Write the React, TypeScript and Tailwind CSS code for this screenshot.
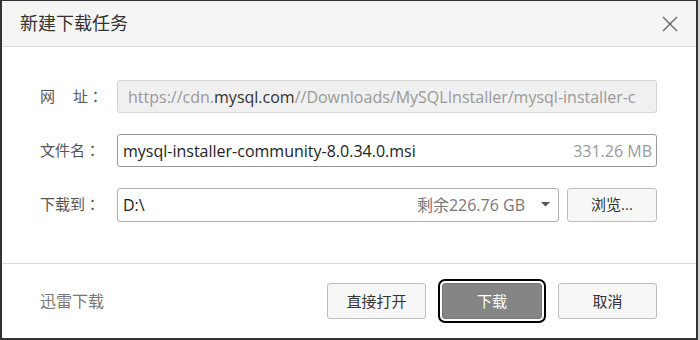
export default function App() {
  const font = { fontFamily: '"Open Sans", "Noto Sans CJK SC", sans-serif' }
  const colon = <span style={{ fontFamily: '"Noto Sans CJK TC", sans-serif' }}>：</span>

  return (
    <div className="w-[700px] h-[340px] bg-[#d0d0d0]" style={font}>
      <div className="w-[698px] h-[340px] flex flex-col bg-white border-l-2 border-t border-r-2 border-b-2 border-[#333]">
        {/* title bar */}
        <div className="h-[46px] shrink-0 flex items-center justify-between pl-[18px] pr-[18px] bg-[#f5f5f5] border-b border-[#d9d9d9]">
          <span className="text-[18px] text-[#333]">新建下载任务</span>
          <svg width="16" height="16" viewBox="0 0 16 16" className="text-[#666]">
            <path d="M1 1 L15 15 M15 1 L1 15" stroke="currentColor" strokeWidth="1.4" fill="none" />
          </svg>
        </div>

        {/* form */}
        <div className="flex flex-col gap-[21px] pt-[33px] pl-[38px] pr-[39px] h-[217px] shrink-0 border-b border-[#d9d9d9]">
          <div className="flex items-center h-[33px]">
            <div className="w-[77px] shrink-0 text-[15px] text-[#555] flex">
              <span>网</span>
              <span className="ml-[18px]">址</span>
              {colon}
            </div>
            <div className="flex-1 min-w-0 h-[33px] flex items-center pl-[10px] pr-[6px] bg-[#f0f0f0] border border-[#d4d4d4] rounded-[3px] text-[16px] text-[#999] whitespace-nowrap">
              https://cdn.<span className="text-[#333]">mysql.com</span>//Downloads/MySQLInstaller/mysql-installer-c
            </div>
          </div>

          <div className="flex items-center h-[33px]">
            <div className="w-[77px] shrink-0 text-[15px] text-[#555]">文件名{colon}</div>
            <div className="flex-1 min-w-0 h-[33px] flex items-center justify-between pl-[5px] pr-[4px] bg-white border border-[#9a9a9a] rounded-[3px] text-[16px]">
              <span className="text-[#222]">mysql-installer-community-8.0.34.0.msi</span>
              <span className="text-[#999]">331.26 MB</span>
            </div>
          </div>

          <div className="flex items-center h-[33px]">
            <div className="w-[77px] shrink-0 text-[15px] text-[#555]">下载到{colon}</div>
            <div className="flex-1 min-w-0 h-[34px] flex items-center pl-[5px] pr-[8px] bg-white border border-[#b0b0b0] rounded-[3px] text-[16px]">
              <span className="text-[#222] flex-1">D:\</span>
              <span className="text-[#777]">剩余226.76 GB</span>
              <svg width="9" height="5" viewBox="0 0 9 5" className="ml-[16px] text-[#555]">
                <path d="M0 0 L9 0 L4.5 4.5 Z" fill="currentColor" />
              </svg>
            </div>
            <button className="ml-[8px] shrink-0 w-[90px] h-[34px] bg-[#f7f7f7] border border-[#bdbdbd] rounded-[3px] text-[15px] text-[#333]">
              浏览...
            </button>
          </div>
        </div>

        {/* footer */}
        <div className="flex-1 flex items-center pl-[38px] pr-[39px]">
          <span className="text-[16px] text-[#777]">迅雷下载</span>
          <div className="ml-auto flex items-center gap-[16px]">
            <button className="w-[99px] h-[36px] bg-[#f7f7f7] border border-[#bdbdbd] rounded-[3px] text-[15px] text-[#333]">
              直接打开
            </button>
            <button className="w-[100px] h-[36px] bg-[#858585] border border-[#777] rounded-[3px] text-[15px] text-white outline-2 outline-black outline-offset-2">
              下载
            </button>
            <button className="w-[99px] h-[36px] bg-[#f7f7f7] border border-[#bdbdbd] rounded-[3px] text-[15px] text-[#333]">
              取消
            </button>
          </div>
        </div>
      </div>
    </div>
  )
}
